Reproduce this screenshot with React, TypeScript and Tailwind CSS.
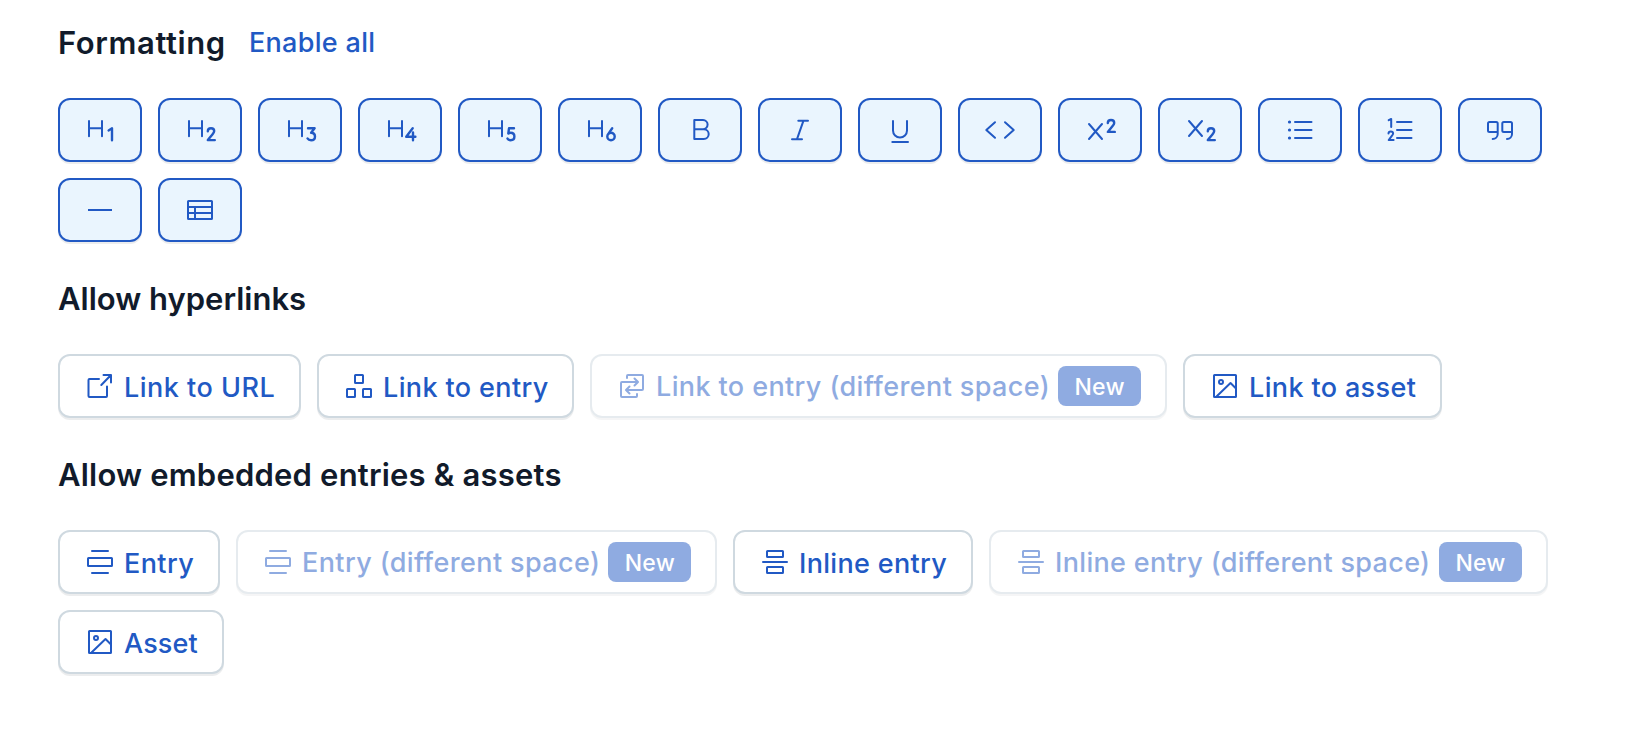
import type { ReactNode } from "react";

function Icon({ children }: { children: ReactNode }) {
  return (
    <svg
      viewBox="0 0 32 32"
      className="size-8 shrink-0 overflow-visible"
      fill="none"
      stroke="currentColor"
      strokeWidth={2}
      strokeLinecap="round"
      strokeLinejoin="round"
      aria-hidden="true"
    >
      {children}
    </svg>
  );
}

const TWO = "M23.8 17.3c0-1.900 1.400-3.100 3.200-3.100s3.200 1.200 3.200 2.900c0 1.200-.7 2.100-1.600 3.200L23.800 26.100h7";

function Heading({ d }: { d: string }) {
  return (
    <Icon>
      <path d="M5 7v15.300M18 7v15.300M5 14.300h13" />
      <path d={d} strokeWidth={2.4} />
    </Icon>
  );
}

const imageIcon = (
  <Icon>
    <rect x="5" y="5" width="22" height="22" rx="0.5" />
    <circle cx="12" cy="12" r="2" />
    <path d="M7.500 26.500 21.500 13l5.500 5.500" />
  </Icon>
);

const entryIcon = (
  <Icon>
    <path d="M8 5h16M8 27h16" />
    <rect x="4" y="12" width="24" height="8" rx="0.5" />
  </Icon>
);

const inlineIcon = (
  <Icon>
    <rect x="8" y="5" width="16" height="6" rx="0.5" />
    <path d="M4 16h24" />
    <rect x="8" y="21" width="16" height="6" rx="0.5" />
  </Icon>
);

const formats: { label: string; icon: ReactNode }[] = [
  { label: "Heading 1", icon: <Heading d="M24.600 16.400 28 14.300V26.200" /> },
  { label: "Heading 2", icon: <Heading d={TWO} /> },
  {
    label: "Heading 3",
    icon: <Heading d="M24 14.300h6.600l-3.500 4.400c2.300 0 3.900 1.500 3.900 3.700s-1.600 3.800-3.900 3.800c-1.600 0-2.900-.7-3.600-1.800" />,
  },
  { label: "Heading 4", icon: <Heading d="M28.700 14.300 22.200 22.800h9.200M29 18.500v7.700" /> },
  {
    label: "Heading 5",
    icon: <Heading d="M30 14.300h-5l-.7 5.200c.6-.5 1.400-.7 2.300-.7 2.200 0 3.800 1.400 3.800 3.700s-1.600 3.700-3.800 3.700c-1.400 0-2.500-.6-3.100-1.600" />,
  },
  {
    label: "Heading 6",
    icon: <Heading d="M28.200 14.300l-4.400 6.300M27 18.800a3.700 3.700 0 1 1 0 7.400a3.700 3.700 0 1 1 0-7.400z" />,
  },
  {
    label: "Bold",
    icon: (
      <Icon>
        <path d="M10.300 6H19a4.500 4.500 0 0 1 0 9.200h-8.700M19 15.200h.8a4.900 4.900 0 0 1 0 9.800h-9.500V6" />
      </Icon>
    ),
  },
  {
    label: "Italic",
    icon: (
      <Icon>
        <path d="M14.300 6.800H24M8 25.200h10M19.400 6.800 13 25.200" />
      </Icon>
    ),
  },
  {
    label: "Underline",
    icon: (
      <Icon>
        <path d="M9 7v9.500a7 7 0 0 0 14 0V7M8.300 28H24" />
      </Icon>
    ),
  },
  {
    label: "Code",
    icon: (
      <Icon>
        <path d="M11 8.200 2.300 16l8.700 7.800M21 8.200l8.700 7.800-8.700 7.800" />
      </Icon>
    ),
  },
  {
    label: "Superscript",
    icon: (
      <Icon>
        <path d="M5 10l13 15M18 10 5 25" />
        <path d={TWO} strokeWidth={2.4} transform="translate(0 -8.2)" />
      </Icon>
    ),
  },
  {
    label: "Subscript",
    icon: (
      <Icon>
        <path d="M5 7l13 15M18 7 5 22" />
        <path d={TWO} strokeWidth={2.4} />
      </Icon>
    ),
  },
  {
    label: "Bulleted list",
    icon: (
      <Icon>
        <path d="M11 8h16.500M11 16h16.500M11 24h16.500" />
        <path d="M5.500 8h.01M5.500 16h.01M5.500 24h.01" strokeWidth={3.2} />
      </Icon>
    ),
  },
  {
    label: "Numbered list",
    icon: (
      <Icon>
        <path d="M13 8h14.500M13 16h14.500M13 24h14.500" />
        <path d="M4.700 6.200 7.200 5v8M4.500 19.400c0-1.200 1-1.900 2.300-1.900s2.300.8 2.300 1.900c0 .9-.5 1.500-1.100 2.200L4.700 26h4.900" />
      </Icon>
    ),
  },
  {
    label: "Quote",
    icon: (
      <Icon>
        <path d="M13.700 18H5.500C4.700 18 4 17.300 4 16.500v-7C4 8.700 4.700 8 5.500 8h6.700c.8 0 1.500.7 1.500 1.500V20a5 5 0 0 1-5 5" />
        <path d="M28 18h-8.200c-.8 0-1.500-.7-1.500-1.500v-7c0-.8.7-1.500 1.500-1.500h6.700c.8 0 1.500.7 1.500 1.500V20a5 5 0 0 1-5 5" />
      </Icon>
    ),
  },
  {
    label: "Horizontal rule",
    icon: (
      <Icon>
        <path d="M4 16h24" strokeLinecap="butt" />
      </Icon>
    ),
  },
  {
    label: "Table",
    icon: (
      <Icon>
        <rect x="4" y="7" width="24" height="18" rx="0.5" />
        <path d="M4 13h24M4 19h24M11 13v12" />
      </Icon>
    ),
  },
];

type OptionProps = {
  icon: ReactNode;
  label: string;
  width: string;
  tracking: string;
  isNew?: boolean;
};

function Option({ icon, label, width, tracking, isNew }: OptionProps) {
  return (
    <button
      type="button"
      disabled={isNew}
      className={`flex h-16 items-center gap-2 rounded-xl border-2 border-[#cfd9e0] bg-white px-6 text-[27px] font-medium whitespace-nowrap text-[#2159c4] shadow-[0_2px_0_rgba(17,27,43,0.08)] disabled:opacity-50 ${width}`}
    >
      {icon}
      <span className={`leading-8 ${isNew ? "pt-0.5" : "pt-1"} ${tracking}`}>{label}</span>
      {isNew && (
        <span className="ml-auto flex h-10 w-[83px] shrink-0 items-center justify-center rounded-lg bg-[#2159c4] pt-0.5 text-[23px] tracking-[0.2px] text-white">
          New
        </span>
      )}
    </button>
  );
}

export default function App() {
  return (
    <main className="h-[730px] w-[1626px] overflow-hidden bg-white px-[58px] pt-[23px] font-['Inter',sans-serif] text-[#111b2b] [font-variant-ligatures:none]">
      <section>
        <div className="flex h-10 items-center gap-6 leading-10">
          <h2 className="w-[167px] text-[31px] font-semibold whitespace-nowrap tracking-[0.6px]">Formatting</h2>
          <button type="button" className="text-[27px] font-medium tracking-[0.3px] whitespace-nowrap text-[#2159c4]">
            Enable all
          </button>
        </div>
        <div className="mt-[35px] flex flex-wrap gap-4">
          {formats.map(({ label, icon }) => (
            <button
              key={label}
              type="button"
              aria-label={label}
              className="flex h-16 w-21 items-center justify-center rounded-xl border-2 border-[#2159c4] bg-[#eaf5fe] text-[#2159c4] shadow-[0_2px_0_rgba(17,27,43,0.08)]"
            >
              {icon}
            </button>
          ))}
        </div>
      </section>

      <section className="mt-[37px]">
        <h2 className="h-10 text-[31px] leading-10 font-semibold tracking-[0px]">Allow hyperlinks</h2>
        <div className="mt-[35px] flex gap-4">
          <Option
            label="Link to URL"
            width="w-[243px]"
            tracking="tracking-[0.5px]"
            icon={
              <Icon>
                <path d="M15 9H5.500a1 1 0 0 0-1 1v16a1 1 0 0 0 1 1H22a1 1 0 0 0 1-1v-9.500M19.500 5H27v7.500M27 5 17.300 15" />
              </Icon>
            }
          />
          <Option
            label="Link to entry"
            width="w-[257px]"
            tracking="tracking-[0.38px]"
            icon={
              <Icon>
                <rect x="12" y="5" width="8" height="8" rx="0.5" />
                <rect x="4" y="19" width="8" height="8" rx="0.5" />
                <rect x="20" y="19" width="8" height="8" rx="0.5" />
              </Icon>
            }
          />
          <Option
            isNew
            label="Link to entry (different space)"
            width="w-[577px]"
            tracking="tracking-[0.39px]"
            icon={
              <Icon>
                <path d="M11 8V6a1 1 0 0 1 1-1h14a1 1 0 0 1 1 1v13a1 1 0 0 1-1 1H10.500M13.500 16.500 10 20l3.500 3.500" />
                <path d="M21 24v2a1 1 0 0 1-1 1H6a1 1 0 0 1-1-1V13a1 1 0 0 1 1-1h15.500M18.500 8.500 22 12l-3.500 3.500" />
              </Icon>
            }
          />
          <Option label="Link to asset" width="w-[259px]" tracking="tracking-[0.36px]" icon={imageIcon} />
        </div>
      </section>

      <section className="mt-[37px]">
        <h2 className="h-10 text-[31px] leading-10 font-semibold tracking-[0.2px]">
          Allow embedded entries &amp; assets
        </h2>
        <div className="mt-[35px] flex flex-wrap gap-4">
          <Option label="Entry" width="w-[162px]" tracking="tracking-[0.4px]" icon={entryIcon} />
          <Option isNew label="Entry (different space)" width="w-[481px]" tracking="tracking-[0.39px]" icon={entryIcon} />
          <Option label="Inline entry" width="w-[240px]" tracking="tracking-[0.32px]" icon={inlineIcon} />
          <Option
            isNew
            label="Inline entry (different space)"
            width="w-[559px]"
            tracking="tracking-[0.33px]"
            icon={inlineIcon}
          />
          <Option label="Asset" width="w-[166px]" tracking="tracking-[0.1px]" icon={imageIcon} />
        </div>
      </section>
    </main>
  );
}
